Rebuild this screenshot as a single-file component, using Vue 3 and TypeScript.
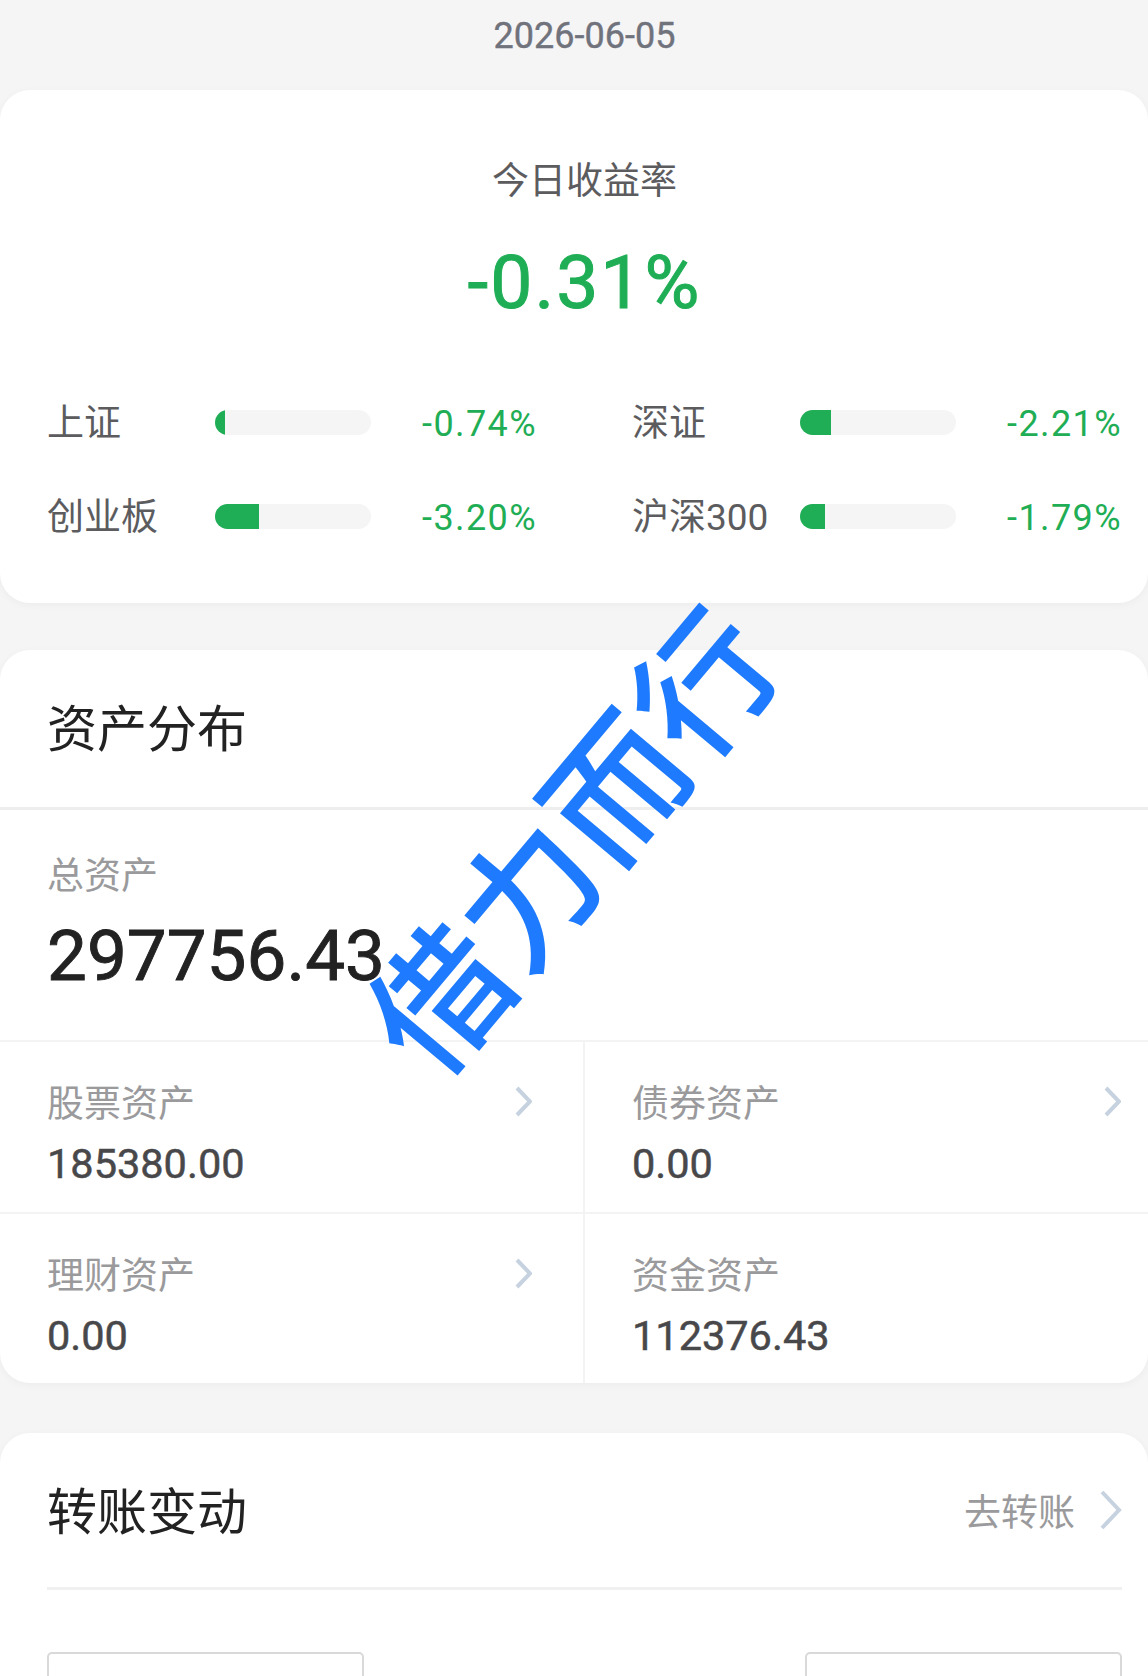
<template>
  <div class="page">
    <div class="date">2026-06-05</div>

    <!-- 今日收益 -->
    <section class="card today">
      <div class="today-title">今日收益率</div>
      <div class="today-rate">-0.31%</div>
      <div class="index-grid">
        <div v-for="item in indexes" :key="item.name" class="index-row">
          <span class="index-name">{{ item.name }}</span>
          <span class="bar">
            <span class="bar-fill" :style="{ width: barWidth(item.rate) }"></span>
          </span>
          <span class="index-rate">{{ item.rate.toFixed(2) }}%</span>
        </div>
      </div>
    </section>

    <!-- 资产分布 -->
    <section class="card assets">
      <div class="section-head">资产分布</div>
      <div class="total">
        <div class="total-label">总资产</div>
        <div class="total-value">297756.43</div>
      </div>
      <div class="asset-grid">
        <div v-for="asset in assets" :key="asset.name" class="asset-cell">
          <div class="asset-top">
            <span class="asset-name">{{ asset.name }}</span>
            <svg v-if="asset.link" class="chevron" viewBox="0 0 17 31" fill="none">
              <path d="M2 2l13 13.5L2 29" />
            </svg>
          </div>
          <div class="asset-value">{{ asset.value }}</div>
        </div>
      </div>
    </section>

    <!-- 转账变动 -->
    <section class="card transfer">
      <div class="transfer-head">
        <span class="transfer-title">转账变动</span>
        <span class="transfer-link">
          去转账
          <svg class="chevron chevron--big" viewBox="0 0 23 40" fill="none">
            <path d="M3 2l17 18L3 38" />
          </svg>
        </span>
      </div>
      <div class="transfer-boxes">
        <div class="transfer-box"></div>
        <div class="transfer-box"></div>
      </div>
    </section>

    <div class="watermark">借力而行</div>
  </div>
</template>

<script setup lang="ts">
interface IndexItem {
  name: string
  rate: number
}

interface AssetItem {
  name: string
  value: string
  link: boolean
}

const indexes: IndexItem[] = [
  { name: '上证', rate: -0.74 },
  { name: '深证', rate: -2.21 },
  { name: '创业板', rate: -3.2 },
  { name: '沪深300', rate: -1.79 }
]

const assets: AssetItem[] = [
  { name: '股票资产', value: '185380.00', link: true },
  { name: '债券资产', value: '0.00', link: true },
  { name: '理财资产', value: '0.00', link: true },
  { name: '资金资产', value: '112376.43', link: false }
]

function barWidth(rate: number): string {
  return `${Math.abs(rate) * 8.9}%`
}
</script>

<style>
html,
body {
  margin: 0;
  background: #f5f5f6;
}
</style>

<style scoped>
.page {
  position: relative;
  height: 1676px;
  overflow: hidden;
  background: #f5f5f6;
  font-family: Roboto, "Noto Sans CJK SC", sans-serif;
}

.date {
  height: 90px;
  padding: 0 0 18px 21px;
  box-sizing: border-box;
  display: flex;
  align-items: center;
  justify-content: center;
  font-size: 36px;
  -webkit-text-stroke: 0.4px #70727c;
  color: #70727c;
}

.card {
  background: #fff;
  border-radius: 30px;
  box-shadow: 0 2px 8px rgba(0, 0, 0, 0.04);
}

.today {
  height: 513px;
  box-sizing: border-box;
  padding: 68px 26px 0 47px;
  margin-bottom: 47px;
}

.today-title {
  text-align: center;
  font-size: 37px;
  line-height: 48px;
  color: #5c5c5f;
}

.today-rate {
  margin-top: 31px;
  text-align: center;
  font-size: 75px;
  line-height: 90px;
  letter-spacing: 2px;
  -webkit-text-stroke: 1px #1fae55;
  color: #1fae55;
}

.index-grid {
  margin-top: 66px;
  display: grid;
  grid-template-columns: 490px 490px;
  column-gap: 95px;
  row-gap: 44px;
}

.index-row {
  display: grid;
  grid-template-columns: 168px 156px 1fr;
  align-items: center;
  height: 50px;
}

.index-name {
  padding-bottom: 4px;
  font-size: 37px;
  color: #5c5c5f;
}

.bar {
  display: block;
  height: 25px;
  border-radius: 13px;
  background: #f5f5f6;
  overflow: hidden;
}

.bar-fill {
  display: block;
  height: 100%;
  background: #1fae55;
}

.index-rate {
  padding-top: 4px;
  text-align: right;
  font-size: 36px;
  letter-spacing: 1.4px;
  color: #1fae55;
}

.assets {
  margin-bottom: 50px;
}

.section-head {
  height: 149px;
  padding: 0 0 8px 47px;
  display: flex;
  align-items: center;
  border-bottom: 3px solid #eeeeef;
  font-size: 50px;
  color: #222;
}

.total {
  padding: 47px 47px 39px;
  border-bottom: 2px solid #f3f3f4;
}

.total-label {
  font-size: 37px;
  line-height: 40px;
  color: #9a9a9c;
}

.total-value {
  margin-top: 14px;
  font-size: 71px;
  line-height: 90px;
  -webkit-text-stroke: 0.9px #222;
  color: #222;
}

.asset-grid {
  display: grid;
  grid-template-columns: 585px 563px;
  grid-template-rows: 172px 169px;
}

.asset-cell {
  box-sizing: border-box;
  padding: 37px 51px 0 47px;
}

.asset-cell:nth-child(odd) {
  border-right: 2px solid #f3f3f4;
}

.asset-cell:nth-child(even) {
  padding-right: 27px;
}

.asset-cell:nth-child(-n + 2) {
  border-bottom: 2px solid #f3f3f4;
}

.asset-top {
  display: flex;
  align-items: center;
  justify-content: space-between;
  height: 44px;
}

.asset-name {
  font-size: 37px;
  color: #9a9a9c;
}

.asset-value {
  margin-top: 16px;
  font-size: 41.5px;
  line-height: 50px;
  -webkit-text-stroke: 0.5px #48484b;
  color: #48484b;
}

.chevron {
  width: 17px;
  height: 31px;
  flex-shrink: 0;
}

.chevron path {
  stroke: #c6d2df;
  stroke-width: 4;
}

.chevron--big {
  width: 23px;
  height: 40px;
  margin-left: 24px;
}

.transfer {
  height: 400px;
  box-sizing: border-box;
  padding: 0 26px 0 47px;
}

.transfer-head {
  height: 154px;
  display: flex;
  align-items: center;
  justify-content: space-between;
  border-bottom: 3px solid #f0f0f1;
}

.transfer-title {
  padding-bottom: 4px;
  font-size: 50px;
  color: #222;
}

.transfer-link {
  display: flex;
  align-items: center;
  font-size: 37px;
  color: #9a9a9c;
}

.transfer-boxes {
  margin-top: 62px;
  display: flex;
  justify-content: space-between;
}

.transfer-box {
  width: 317px;
  height: 120px;
  box-sizing: border-box;
  border: 2px solid #d9d9d9;
  border-radius: 5px;
}

/* 水印，盖在卡片上面 */
.watermark {
  position: absolute;
  left: 566px;
  top: 836px;
  transform: translate(-50%, -50%) rotate(-50deg);
  white-space: nowrap;
  font-family: "Noto Sans CJK SC", sans-serif;
  font-size: 137px;
  font-weight: 500;
  line-height: 1;
  color: #1e7bff;
}
</style>
